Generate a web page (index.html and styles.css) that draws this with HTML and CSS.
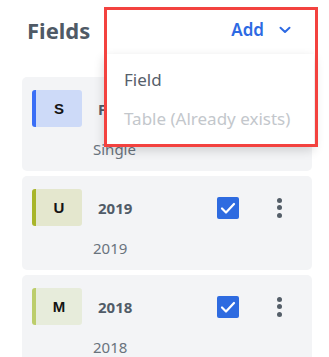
FILE: index.html
```html
<!DOCTYPE html>
<html>
<head>
<meta charset="utf-8">
<link rel="stylesheet" href="styles.css">
</head>
<body>
<div class="page">
  <header class="header">
    <h1 class="title">Fields</h1>
    <button class="add">Add
      <svg class="chev" width="12" height="8" viewBox="0 0 12 8"><path d="M1.5 1.8 L6 6 L10.5 1.8" fill="none" stroke="#2d6ae3" stroke-width="2" stroke-linecap="round" stroke-linejoin="round"/></svg>
    </button>
  </header>
  <div class="list">
    <div class="card">
      <div class="row">
        <div class="badge badge-s">S</div>
        <div class="name">Format</div>
        <span class="check"><svg width="22" height="22" viewBox="0 0 22 22"><path d="M5 11.5 L9 15.5 L17 7" fill="none" stroke="#fff" stroke-width="2.2" stroke-linecap="round" stroke-linejoin="round"/></svg></span>
        <span class="kebab"><i></i><i></i><i></i></span>
      </div>
      <div class="sub">Single</div>
    </div>
    <div class="card">
      <div class="row">
        <div class="badge badge-u">U</div>
        <div class="name">2019</div>
        <span class="check"><svg width="22" height="22" viewBox="0 0 22 22"><path d="M5 11.5 L9 15.5 L17 7" fill="none" stroke="#fff" stroke-width="2.2" stroke-linecap="round" stroke-linejoin="round"/></svg></span>
        <span class="kebab"><i></i><i></i><i></i></span>
      </div>
      <div class="sub">2019</div>
    </div>
    <div class="card">
      <div class="row">
        <div class="badge badge-m">M</div>
        <div class="name">2018</div>
        <span class="check"><svg width="22" height="22" viewBox="0 0 22 22"><path d="M5 11.5 L9 15.5 L17 7" fill="none" stroke="#fff" stroke-width="2.2" stroke-linecap="round" stroke-linejoin="round"/></svg></span>
        <span class="kebab"><i></i><i></i><i></i></span>
      </div>
      <div class="sub">2018</div>
    </div>
  </div>
  <div class="menu">
    <div class="item">Field</div>
    <div class="item disabled">Table (Already exists)</div>
  </div>
  <div class="highlight"></div>
</div>
</body>
</html>
```

FILE: styles.css
```css
* { box-sizing: border-box; }
html, body { margin: 0; padding: 0; background: #fff; }
body { font-family: "Noto Sans", "Open Sans", sans-serif; overflow: hidden; }
.page { position: relative; width: 329px; height: 357px; padding: 0 17px 0 22px; }
.header { height: 77px; display: flex; align-items: flex-start; justify-content: space-between; }
.title { margin: 0; padding: 15px 0 0 5px; font-size: 22px; line-height: 30px; font-weight: 700; color: #4f5a66; }
.add { margin: 16px 21px 0 0; padding: 0; border: 0; background: none; display: flex; align-items: center; gap: 15px; font-family: "Noto Sans", sans-serif; font-size: 17px; line-height: 28px; font-weight: 600; color: #2d6ae3; }
.chev { display: block; }
.list { display: flex; flex-direction: column; gap: 5px; }
.card { background: #f3f4f6; border-radius: 5px; padding: 13px 10px 12px 10px; }
.row { display: flex; align-items: center; height: 37px; }
.badge { width: 50px; height: 37px; border-radius: 3px; border-left: 4px solid; display: flex; align-items: center; justify-content: center; font-family: "Liberation Sans", Arial, sans-serif; font-weight: 700; font-size: 15px; color: #141414; }
.badge-s { background: #cddaf8; border-left-color: #3a6ef6; }
.badge-u { background: #e4e7ce; border-left-color: #a8b52a; }
.badge-m { background: #e7ecdb; border-left-color: #bccd6b; }
.name { margin-left: 16px; flex: 1; font-size: 15px; font-weight: 700; color: #515c68; }
.check { width: 22px; height: 22px; border-radius: 2px; background: #2e6be0; display: block; }
.check svg { display: block; }
.kebab { margin: 0 20px 0 38px; display: flex; flex-direction: column; gap: 2.5px; }
.kebab i { width: 5px; height: 5px; border-radius: 50%; background: #545e68; display: block; }
.sub { margin-top: 12px; padding-left: 61px; font-size: 15px; line-height: 20px; color: #69737d; }
.menu { position: absolute; left: 104px; top: 54px; width: 210px; height: 92px; background: #fff; box-shadow: 0 4px 10px rgba(0,0,0,0.16); padding: 6px 0 0 20px; }
.item { font-size: 17px; line-height: 39px; color: #56606b; }
.item.disabled { color: #c3c7cc; }
.highlight { position: absolute; left: 104px; top: 7px; width: 214px; height: 140px; border: 3px solid #f3423f; }
```
